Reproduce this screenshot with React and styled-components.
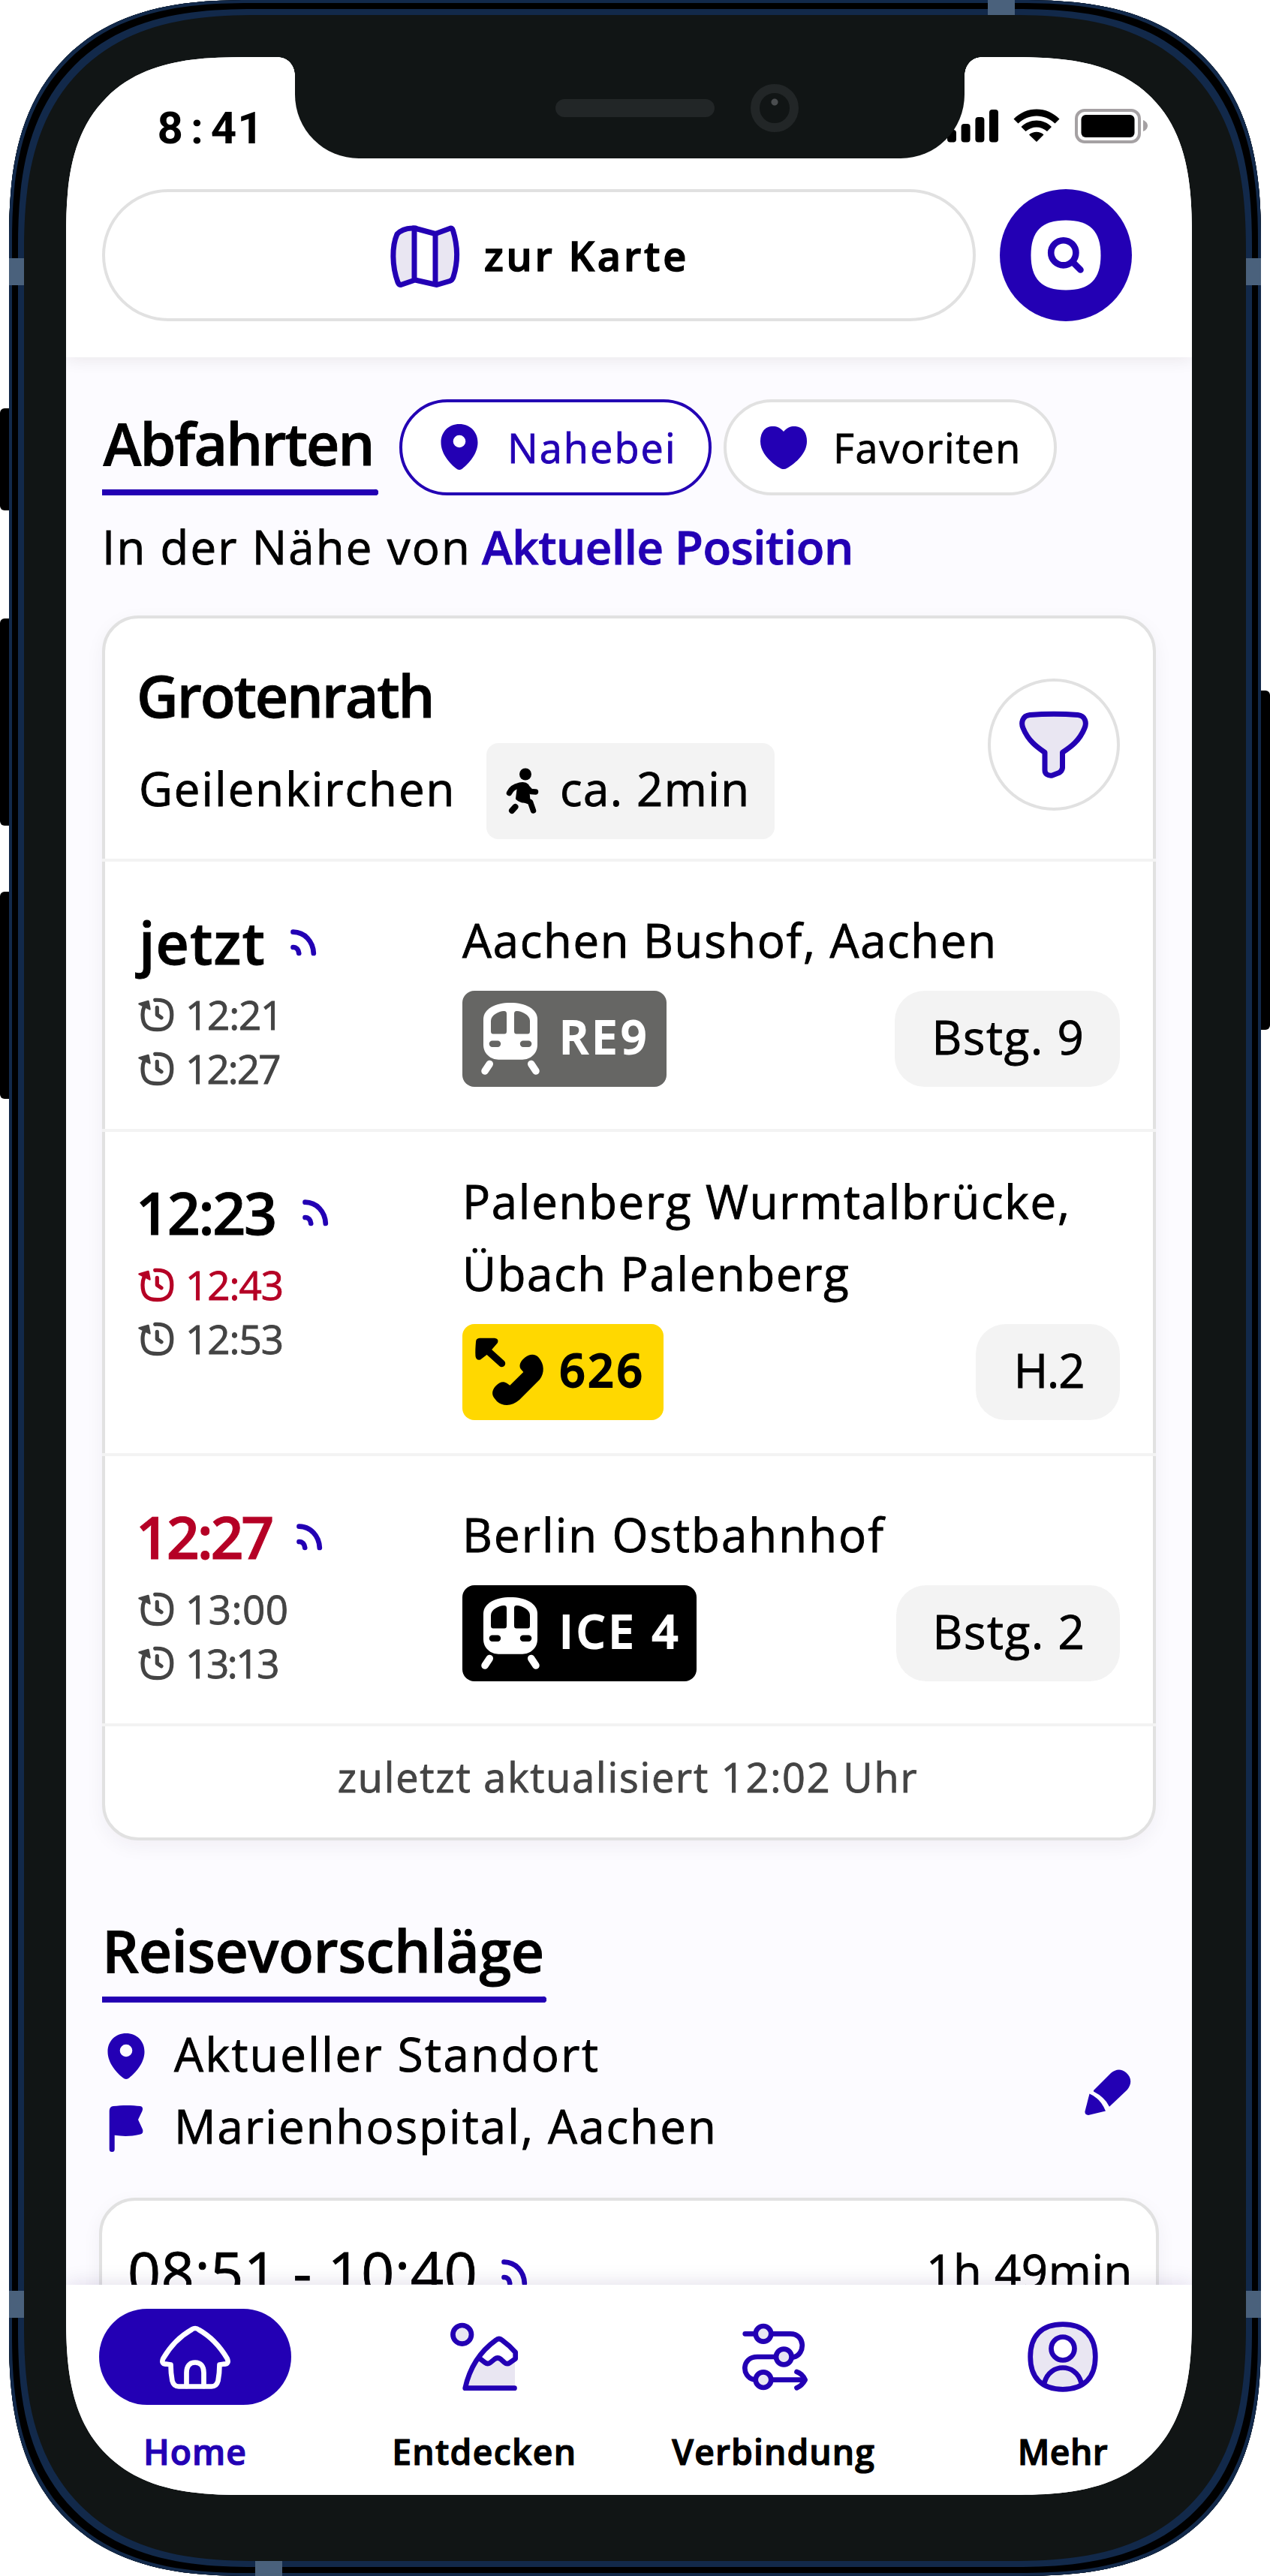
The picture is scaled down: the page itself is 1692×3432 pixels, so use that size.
import React from "react";
import styled, { createGlobalStyle } from "styled-components";

const BLUE = "#2300b4";
const TINT = "#e9e6f2";
const LINE = "#e1e1e1";
const SOFT = "#f3f3f3";
const GREY = "#444444";
const RED = "#b50025";

const GlobalStyle = createGlobalStyle`
  * { box-sizing: border-box; }
  html, body { margin: 0; padding: 0; background: #fff; }
  body { font-family: "Open Sans", "Noto Sans", sans-serif; color: #000; }
  svg { display: block; flex: none; overflow: visible; }
`;

/* ---------- device ---------- */

const Device = styled.div`
  position: relative;
  width: 1692px;
  height: 3432px;
  padding: 0 12px;
  overflow: hidden;
`;

const Frame = styled.div`
  position: relative;
  height: 3432px;
  padding: 76px 72px 108px 76px;
  background: #111515;
  border-radius: 320px;
  corner-shape: superellipse(1.354);
  box-shadow: inset 0 0 0 4px #12294a, inset 0 0 0 12px #000, inset 0 0 0 20px #12294a;
`;

const SideButton = styled.div`
  position: absolute;
  ${(p) => p.$side}: 0;
  top: ${(p) => p.$top}px;
  width: 12px;
  height: ${(p) => p.$height}px;
  background: #000;
  border-radius: ${(p) => (p.$side === "left" ? "6px 0 0 6px" : "0 6px 6px 0")};
`;

const Antenna = styled.div`
  position: absolute;
  left: ${(p) => p.$x}px;
  top: ${(p) => p.$y}px;
  width: ${(p) => (p.$flat ? 36 : 20)}px;
  height: ${(p) => (p.$flat ? 20 : 36)}px;
  background: #4a617c;
`;

const Notch = styled.div`
  position: absolute;
  z-index: 5;
  left: 393px;
  top: 70px;
  width: 892px;
  height: 141px;
  background: #111515;
  border-radius: 0 0 85px 85px;
`;

const NotchFlare = styled.div`
  position: absolute;
  z-index: 5;
  top: 76px;
  left: ${(p) => (p.$right ? 1285 : 371)}px;
  width: 22px;
  height: 24px;
  background: radial-gradient(
    ellipse 22px 24px at ${(p) => (p.$right ? "100%" : "0")} 100%,
    transparent 98%,
    #111515 100%
  );
`;

const Speaker = styled.div`
  position: absolute;
  left: 347px;
  top: 62px;
  width: 212px;
  height: 24px;
  border-radius: 12px;
  background: #222627;
`;

const Camera = styled.div`
  position: absolute;
  left: 607px;
  top: 42px;
  width: 64px;
  height: 64px;
  border-radius: 50%;
  border: 12px solid #222627;
  background: radial-gradient(circle at 20px 12px, #4a4d4f 0 4px, transparent 5px);
`;

const Screen = styled.div`
  display: flex;
  flex-direction: column;
  width: 1500px;
  height: 3248px;
  overflow: hidden;
  background: #fcfbff;
  border-radius: 240px;
  corner-shape: superellipse(1.446);
`;

/* ---------- shared ---------- */

const Text = styled.span`
  display: block;
  white-space: nowrap;
  font-size: ${(p) => p.$size}px;
  font-weight: ${(p) => p.$weight || 400};
  letter-spacing: ${(p) => p.$spacing || 0}px;
  line-height: ${(p) => p.$line || 96}px;
  color: ${(p) => p.$color || "#000"};
  -webkit-text-stroke: ${(p) => p.$stroke || 0.9}px currentColor;
`;

const Nudge = styled.div`
  margin-left: ${(p) => p.$x}px;
`;

const Lift = styled.div`
  padding-bottom: ${(p) => p.$by}px;
`;

/* ---------- header ---------- */

const Header = styled.header`
  position: relative;
  z-index: 2;
  flex: none;
  height: 400px;
  background: #fff;
  box-shadow: 0 2px 22px rgba(30, 20, 10, 0.09);
`;

const StatusBar = styled.div`
  display: flex;
  justify-content: space-between;
  height: 176px;
  padding: 64px 58px 0 121px;
`;

const Clock = styled.div`
  display: flex;
  height: 62px;
  font: 700 60px/62px Roboto, "Open Sans", sans-serif;
`;

const ClockCell = styled.span`
  width: 35.6px;
  text-align: center;
`;

const StatusIcons = styled.div`
  display: flex;
  gap: 20px;
  padding-top: 5px;
`;

const SearchRow = styled.div`
  display: flex;
  gap: 32px;
  padding-left: 48px;
`;

const MapButton = styled.div`
  display: flex;
  align-items: center;
  justify-content: center;
  gap: 31px;
  width: 1164px;
  height: 176px;
  border: 4px solid ${LINE};
  border-radius: 88px;
  background: #fff;
`;

const RoundButton = styled.div`
  display: flex;
  align-items: center;
  justify-content: center;
  flex: none;
  width: 176px;
  height: 176px;
  border-radius: 50%;
  border: ${(p) => (p.$filled ? "none" : `4px solid ${LINE}`)};
  background: ${(p) => (p.$filled ? BLUE : "#fff")};
`;

/* ---------- content ---------- */

const Content = styled.main`
  flex: 1;
  min-height: 0;
  overflow: hidden;
  padding: 56px 44px 0 48px;
`;

const TitleRow = styled.div`
  display: flex;
  height: 128px;
`;

const Title = styled.h2`
  margin: 0;
  width: ${(p) => p.$width}px;
  height: 128px;
  background: linear-gradient(${BLUE}, ${BLUE}) 0 100% / calc(100% - 4px) 8px no-repeat,
    radial-gradient(circle at calc(100% - 4px) calc(100% - 4px), ${BLUE} 4px, transparent 4.6px);
`;

const FilterChip = styled.div`
  display: flex;
  align-items: center;
  gap: ${(p) => p.$inner}px;
  width: ${(p) => p.$width}px;
  height: 128px;
  margin-left: ${(p) => p.$gap}px;
  padding-left: 44px;
  border: 4px solid ${(p) => (p.$active ? BLUE : LINE)};
  border-radius: 64px;
  background: #fff;
`;

const Nearby = styled.div`
  display: flex;
  gap: 14px;
  height: 160px;
`;

const Card = styled.section`
  width: 1404px;
  border: 4px solid ${LINE};
  border-radius: 48px;
  background: #fff;
  box-shadow: 0 8px 26px rgba(30, 20, 50, 0.05);
`;

const StopHeader = styled.div`
  display: flex;
  justify-content: space-between;
  height: 320px;
  padding: 38px 44px 0;
`;

const FilterSlot = styled.div`
  padding-top: 42px;
`;

const StopLine = styled.div`
  display: flex;
  align-items: center;
  height: 124px;
`;

const StopPlace = styled.div`
  width: 464px;
  padding: 0 0 9px 1px;
`;

const WalkChip = styled.div`
  display: flex;
  align-items: center;
  gap: 18px;
  width: 384px;
  height: 128px;
  padding-left: 16px;
  border-radius: 16px;
  background: ${SOFT};
`;

const Departure = styled.div`
  display: flex;
  height: ${(p) => p.$height}px;
  margin: 0 -4px;
  padding: 0 48px;
  border-top: 4px solid ${SOFT};
`;

const Times = styled.div`
  width: 432px;
  padding-top: 48px;
`;

const TimeMain = styled.div`
  display: flex;
  align-items: center;
  gap: ${(p) => p.$gap}px;
  height: 120px;
`;

const TimeNext = styled.div`
  display: flex;
  align-items: center;
  gap: 15px;
  height: 72px;
`;

const Route = styled.div`
  display: flex;
  flex: 1;
  flex-direction: column;
  justify-content: center;
  gap: 20px;
`;

const RouteMeta = styled.div`
  display: flex;
  justify-content: space-between;
`;

const LineBadge = styled.div`
  display: flex;
  align-items: center;
  gap: 17px;
  width: ${(p) => p.$width}px;
  height: 128px;
  padding-left: 16px;
  border-radius: 16px;
  background: ${(p) => p.$bg};
`;

const Platform = styled.div`
  display: flex;
  align-items: center;
  justify-content: center;
  width: ${(p) => p.$width}px;
  height: 128px;
  padding: 0 0 7px 3px;
  border-radius: 40px;
  background: ${SOFT};
`;

const Updated = styled.div`
  display: flex;
  justify-content: center;
  height: 152px;
  margin: 0 -4px;
  padding-right: 3px;
  border-top: 4px solid ${SOFT};
`;

const Suggestions = styled.section`
  padding-top: 88px;
`;

const Places = styled.div`
  display: flex;
  align-items: center;
  justify-content: space-between;
  width: 1372px;
  margin: 24px 0 44px;
`;

const Place = styled.div`
  display: flex;
  align-items: center;
  gap: 32px;
  height: 96px;
`;

const TripCard = styled.div`
  display: flex;
  justify-content: space-between;
  width: 1412px;
  height: 400px;
  margin-left: -4px;
  padding: 35px 31px 0 34px;
  border: 4px solid ${LINE};
  border-radius: 48px;
  background: #fff;
  box-shadow: 0 8px 26px rgba(30, 20, 50, 0.05);
`;

const TripTime = styled.div`
  display: flex;
  align-items: flex-start;
  gap: 29px;
`;

const TripSignal = styled.div`
  padding-top: 41px;
`;

/* ---------- bottom navigation ---------- */

const Nav = styled.nav`
  position: relative;
  z-index: 2;
  display: flex;
  flex: none;
  justify-content: space-between;
  height: 280px;
  padding: 32px 44px 0;
  background: #fff;
  box-shadow: 0 -2px 24px rgba(35, 0, 100, 0.13);
`;

const NavItem = styled.div`
  display: flex;
  flex-direction: column;
  align-items: center;
  width: 256px;
`;

const NavIcon = styled.div`
  display: flex;
  align-items: center;
  justify-content: center;
  width: 256px;
  height: 128px;
  margin-bottom: 31px;
  border-radius: 64px;
  background: ${(p) => (p.$active ? BLUE : "transparent")};
`;

/* ---------- icons ---------- */

const line = { fill: "none", strokeLinecap: "round", strokeLinejoin: "round" };

const CellBars = () => (
  <svg width="68" height="46" viewBox="0 0 68 46">
    <rect x="0" y="28" width="12" height="16.5" rx="4" />
    <rect x="18.6" y="20" width="12" height="24.5" rx="4" />
    <rect x="37.4" y="11" width="12" height="33.5" rx="4" />
    <rect x="56" y="1" width="12" height="43.5" rx="4" />
  </svg>
);

const Wifi = () => (
  <svg width="62" height="46" viewBox="0 0 62 46">
    <path d="M0.5 13.5 C17 -4 45 -4 61.5 13.5 L55.5 19.5 C42 6 20 6 6.5 19.5Z" />
    <path d="M10.5 24 C22 12.5 40 12.5 51 24 L45 30 C37 22.5 25 22.5 16.5 30Z" />
    <path d="M21 34.5 C26.5 29.5 35.5 29.5 40.5 34.5 L31 44Z" />
  </svg>
);

const Battery = () => (
  <svg width="98" height="46" viewBox="0 0 98 46">
    <rect x="2" y="2" width="84" height="42" rx="11" fill="none" stroke="#a5a1a3" strokeWidth="4" />
    <rect x="8.5" y="8" width="71" height="30" rx="6" />
    <path d="M91 15 C99 18 99 27 91 30Z" fill="#a5a1a3" />
  </svg>
);

const MapIcon = () => (
  <svg width="96" height="96" viewBox="520 292 96 96" {...line}>
    <path d="M531 312 Q539 304.5 554 304 V373 L534 379 C524 356 525 328 531 312Z" fill={TINT} />
    <path d="M582 311 L604 304.5 C612 326 611.5 352 604 373 L582 379.5Z" fill={TINT} />
    <path
      d="M531 312 Q538 304.5 551 304 Q555 303.5 558 305 L582 311.5 L601 304.5 Q604.5 303 605.5 307 C612 328 612 350 606 369 Q605 373 601 374.5 L584 379.5 L555 373 L536 379.5 Q533.5 379.5 532 376 C524 354 524 328 531 312Z"
      stroke={BLUE}
      strokeWidth="7"
    />
    <path d="M554 305 V372 M582 312 V378" stroke={BLUE} strokeWidth="7" />
  </svg>
);

const SearchIcon = () => (
  <svg width="96" height="96" viewBox="1372 292 96 96" {...line}>
    <path
      d="M1420 293.5 C1452 293.5 1466.5 308 1466.5 340 S1452 386.5 1420 386.5 S1373.5 372 1373.5 340 S1388 293.5 1420 293.5Z"
      fill="#fff"
    />
    <circle cx="1416.8" cy="336.8" r="16.6" stroke={BLUE} strokeWidth="8.6" />
    <path d="M1429.5 349.5 L1439.5 359.5" stroke={BLUE} strokeWidth="8.6" />
  </svg>
);

const PinIcon = () => (
  <svg width="64" height="64" viewBox="0 0 64 64" fill={BLUE}>
    <path
      fillRule="evenodd"
      d="M32 1 C18 1 7.5 11 7.5 25.5 C7.5 41 20 54 27.5 60 C30.5 62.5 33.5 62.5 36.5 60 C44 54 56.5 41 56.5 25.5 C56.5 11 46 1 32 1Z M32 15.7 a8.3 8.3 0 1 1 0 16.6 a8.3 8.3 0 1 1 0 -16.6Z"
    />
  </svg>
);

const HeartIcon = () => (
  <svg width="64" height="64" viewBox="0 0 64 64" fill={BLUE}>
    <path d="M32 11 C27 4.5 21 3.5 16 4 C6 5 1 13 1 24 C1 40 16 53 27 59.5 C30.5 61.5 33.5 61.5 37 59.5 C48 53 63 40 63 24 C63 13 58 5 48 4 C43 3.5 37 4.5 32 11Z" />
  </svg>
);

const WalkIcon = () => (
  <svg width="64" height="64" viewBox="0 0 64 64" stroke="#000" {...line}>
    <circle cx="36" cy="9.5" r="8" fill="#000" stroke="none" />
    <path d="M14.5 34.5 Q18 26.5 28 24.5" strokeWidth="7.5" />
    <path d="M27 22.5 Q35 20 39 24 L41 44 Q33 49 24.5 42Z" fill="#000" strokeWidth="3" />
    <path d="M38 27 L43 32.5 L49.5 33" strokeWidth="7.5" />
    <path d="M33 43 L42.5 46.5 L46.5 58" strokeWidth="7.5" />
    <path d="M22.5 53 L18 58" strokeWidth="8" />
  </svg>
);

const FunnelIcon = () => (
  <svg width="96" height="96" viewBox="1356 944 96 96" {...line}>
    <path
      d="M1372 952.5 Q1404 950 1436 952.5 C1446 953.5 1448 963 1445 970 C1438 987 1427 995 1415.5 1002.5 V1023 Q1415 1027 1411 1029.5 L1402 1033 C1396 1034 1392 1031 1392 1026 V1002.5 C1381 995 1370 987 1363 970 C1360 963 1362 953.5 1372 952.5Z"
      fill={TINT}
      stroke={BLUE}
      strokeWidth="7"
    />
  </svg>
);

const SignalIcon = () => (
  <svg width="40" height="40" viewBox="0 0 40 40" stroke={BLUE} strokeWidth="6.7" {...line}>
    <path d="M6.5 5.7 C22 6 33 18 33.8 34" />
    <path d="M6.5 26 C11 26 13.8 29.5 14.2 34" />
  </svg>
);

const HistoryIcon = ({ color }) => (
  <svg width="48" height="48" viewBox="0 0 48 48" stroke={color} strokeWidth="5.2" {...line}>
    <path d="M22.7 4.3 C39 3.5 44.8 11 44.8 24 S39 43.7 25.5 43.7 S6 38 6 24 Q6 18 8 13.5" />
    <path d="M1.5 9.5 L13.5 6 L15.5 16.5 Z" fill={color} strokeWidth="2.5" />
    <path d="M25.3 14.3 V24 L31 27.8" />
  </svg>
);

const TrainIcon = ({ bg }) => (
  <svg width="96" height="96" viewBox="0 0 96 96">
    <path
      fill="#fff"
      d="M12 22 C12 8 28 0 48 0 S84 8 84 22 V56 C84 68 74 75.7 64 75.7 H32 C22 75.7 12 68 12 56Z"
    />
    <g fill={bg}>
      <path d="M22 24 C22 16 33 11.5 39 11 Q43 10.5 43 14.5 V38 Q43 41.5 40 41.5 H25 Q22 41.5 22 38Z" />
      <path d="M74 24 C74 16 63 11.5 57 11 Q53 10.5 53 14.5 V38 Q53 41.5 56 41.5 H71 Q74 41.5 74 38Z" />
      <rect x="19.7" y="50.5" width="15.5" height="8.5" rx="4.2" />
      <rect x="60.8" y="50.5" width="15.5" height="8.5" rx="4.2" />
    </g>
    <path
      d="M20.3 81.5 L14 91 M75.7 81.5 L82 91"
      stroke="#fff"
      strokeWidth="9.5"
      strokeLinecap="round"
    />
  </svg>
);

const CallBusIcon = () => (
  <svg width="96" height="96" viewBox="0 0 96 96">
    <path d="M2 8 Q2 3 7 2.8 L27 2.8 Q33 3.5 31 9 L23.7 17.5 L16.5 25 L8 31.5 Q2.5 33 1.5 27 C1 20 1.5 14 2 8Z" />
    <path d="M16 18 L36.5 36.5" stroke="#000" strokeWidth="9.5" strokeLinecap="round" />
    <path d="M65.3 48 L61.5 43.5 C58.5 38 63 32 67.5 28.5 C73 24 81 23 86 29 C93 37 94 49 87 58 L60 85 C50 94 38 94 30 87 L26 82 C22 76 25 70 29 66 C34 60.5 39 60 43.5 63 L47.3 65.7Z" />
  </svg>
);

const FlagIcon = () => (
  <svg width="64" height="64" viewBox="0 0 64 64" fill={BLUE}>
    <path d="M9.7 8 Q10 2.5 15 2 C26 0.5 40 0.5 51 2 Q55.5 3 53.5 8.5 L48 20 L54 33 Q56 38.5 50 39.8 C38 42.5 28 42.5 16.7 40.8 V59.5 Q16.7 63 13.2 63 Q9.7 63 9.7 59.5Z" />
  </svg>
);

const PencilIcon = () => (
  <svg width="64" height="64" viewBox="0 0 64 64" fill={BLUE}>
    <path d="M13 29 L36 6 C43 0 50 0 56.5 5.5 C64 12 64 21 57.5 28.5 L34 50.8 Q28 38 13 30.5Z" />
    <path d="M7.5 33.5 Q22 39.5 29 56.5 L6 62 Q1 62 1.5 57Z" />
  </svg>
);

const HomeIcon = () => (
  <svg width="96" height="96" viewBox="0 0 96 96" stroke="#fff" strokeWidth="6.7" {...line}>
    <path d="M48 10 Q50.5 10 53 12 C68 20.5 81 34 90.5 50 C93 55 91 58 87 57.5 L80.5 58.5 C80.5 66 80 72 78.5 80 Q76.5 87.5 70 87.5 H26 Q19.5 87.5 17.5 80 C16 72 15.5 66 15.5 58.5 L9 57.5 C5 58 3 55 5.5 50 C15 34 28 20.5 43 12 Q45.5 10 48 10Z" />
    <path d="M36.5 87 V69 C36.5 60 41 55.5 48 55.5 S59.5 60 59.5 69 V87" />
  </svg>
);

const ExploreIcon = () => (
  <svg width="96" height="96" viewBox="0 0 96 96" stroke={BLUE} strokeWidth="6.7" {...line}>
    <path
      d="M41.5 50 L53 57 L66 49.7 L78.7 57 L89 52 V89.7 H23 C27 74 33 61 41.5 50Z"
      fill={TINT}
      stroke="none"
    />
    <circle cx="18.7" cy="18.3" r="12.3" fill={TINT} />
    <path d="M88.5 89.7 H22.7 C28 66 41 42 63.7 25.8 Q67.5 22.5 71.5 25.5 Q82 33 89.7 42 V50.5 L82 56 Q78.5 58.5 75 55.5 L70 51 Q66 48 62 51 L56.5 55.5 Q53 58.5 49 55.5 L42.5 50.5" />
  </svg>
);

const RouteIcon = () => (
  <svg width="96" height="96" viewBox="0 0 96 96" stroke={BLUE} strokeWidth="6.7" {...line}>
    <path d="M9.7 17.3 H23.5 M45 17.3 H70 C90 17.3 90.5 45 74 48.5 L71.5 48 M50 48 H26 C5 48 4.5 74 21 78.3 L24 78.7 M45 78.7 H88.5" />
    <path d="M78.5 68 Q85.5 70 89.7 78.7 Q85.5 86.5 78.5 89.3" />
    <g fill={TINT}>
      <circle cx="34" cy="17.3" r="10.3" />
      <circle cx="61.3" cy="48" r="10.3" />
      <circle cx="34" cy="78.7" r="10.3" />
    </g>
  </svg>
);

const ProfileIcon = () => (
  <svg width="96" height="96" viewBox="0 0 96 96" stroke={BLUE} strokeWidth="6.7" {...line}>
    <path
      d="M48 4.7 C76 4.7 91.3 20 91.3 48 S76 91.3 48 91.3 S4.7 76 4.7 48 S20 4.7 48 4.7Z"
      fill={TINT}
    />
    <circle cx="48" cy="37" r="15.5" fill="#fff" />
    <path d="M23.6 82 C31 56 65 56 72.4 82" />
  </svg>
);

/* ---------- data ---------- */

const departures = [
  {
    height: 360,
    time: { label: "jetzt", spacing: 1.1, gap: 30, shift: 1 },
    next: [
      { label: "12:21", spacing: -1.2 },
      { label: "12:27", spacing: -1.9 },
    ],
    stops: [{ label: "Aachen Bushof, Aachen", spacing: 1.7, shift: 0 }],
    badge: { label: "RE9", spacing: 4.4, width: 272, bg: "#666664", color: "#fff" },
    platform: { label: "Bstg. 9", width: 300, spacing: 1.7 },
  },
  {
    height: 432,
    time: { label: "12:23", spacing: -2.3, gap: 33, shift: -3 },
    next: [
      { label: "12:43", spacing: -1, color: RED },
      { label: "12:53", spacing: -1 },
    ],
    stops: [
      { label: "Palenberg Wurmtalbrücke,", spacing: 1.74, shift: 0 },
      { label: "Übach Palenberg", spacing: 1.7, shift: 0 },
    ],
    badge: { label: "626", spacing: 3.2, width: 268, bg: "#ffd800", color: "#000", call: true },
    platform: { label: "H.2", width: 192, spacing: -1.1 },
  },
  {
    height: 360,
    time: { label: "12:27", spacing: -3.2, gap: 30, shift: -3, color: RED },
    next: [
      { label: "13:00", spacing: 0.5 },
      { label: "13:13", spacing: -2.4 },
    ],
    stops: [{ label: "Berlin Ostbahnhof", spacing: 2.1, shift: 0 }],
    badge: { label: "ICE 4", spacing: 4.1, width: 312, bg: "#000", color: "#fff" },
    platform: { label: "Bstg. 2", width: 298, spacing: 1.7 },
  },
];

const tabs = [
  { label: "Home", spacing: 1, icon: <HomeIcon />, active: true },
  { label: "Entdecken", spacing: 1.3, icon: <ExploreIcon /> },
  { label: "Verbindung", spacing: 1.1, icon: <RouteIcon /> },
  { label: "Mehr", spacing: 0.4, icon: <ProfileIcon /> },
];

export default function App() {
  return (
    <>
      <GlobalStyle />
      <Device>
        <SideButton $side="left" $top={544} $height={136} />
        <SideButton $side="left" $top={824} $height={276} />
        <SideButton $side="left" $top={1188} $height={276} />
        <SideButton $side="right" $top={920} $height={452} />
        <Frame>
          <Screen>
            <Header>
              <StatusBar>
                <Clock>
                  <ClockCell>8</ClockCell>
                  <ClockCell>:</ClockCell>
                  <ClockCell>4</ClockCell>
                  <ClockCell>1</ClockCell>
                </Clock>
                <StatusIcons>
                  <CellBars />
                  <Wifi />
                  <Battery />
                </StatusIcons>
              </StatusBar>
              <SearchRow>
                <MapButton>
                  <MapIcon />
                  <Text $size={54} $weight={600} $spacing={3.8} $stroke={1.4}>zur Karte</Text>
                </MapButton>
                <RoundButton $filled>
                  <SearchIcon />
                </RoundButton>
              </SearchRow>
            </Header>

            <Content>
              <TitleRow>
                <Title $width={368}>
                  <Nudge $x={1.5}>
                    <Text $size={77} $weight={600} $spacing={-1.92} $line={117}>Abfahrten</Text>
                  </Nudge>
                </Title>
                <FilterChip $width={416} $gap={28} $inner={32} $active>
                  <PinIcon />
                  <Text $size={54} $spacing={2.09} $color={BLUE}>Nahebei</Text>
                </FilterChip>
                <FilterChip $width={444} $gap={16} $inner={34}>
                  <HeartIcon />
                  <Text $size={54} $spacing={1.7}>Favoriten</Text>
                </FilterChip>
              </TitleRow>
              <Nearby>
                <Text $size={61.7} $spacing={2.15} $line={137}>In der Nähe von</Text>
                <Text $size={61.7} $weight={600} $spacing={-0.45} $line={137} $color={BLUE}>
                  Aktuelle Position
                </Text>
              </Nearby>

              <Card>
                <StopHeader>
                  <div>
                    <Nudge $x={-2}>
                      <Text $size={77} $weight={600} $spacing={-2.19} $line={130}>Grotenrath</Text>
                    </Nudge>
                    <StopLine>
                      <StopPlace>
                        <Text $size={61.7} $spacing={2.02}>Geilenkirchen</Text>
                      </StopPlace>
                      <WalkChip>
                        <WalkIcon />
                        <Lift $by={8}>
                          <Text $size={61.7} $spacing={1.48}>ca. 2min</Text>
                        </Lift>
                      </WalkChip>
                    </StopLine>
                  </div>
                  <FilterSlot>
                    <RoundButton>
                      <FunnelIcon />
                    </RoundButton>
                  </FilterSlot>
                </StopHeader>

                {departures.map((d) => (
                  <Departure key={d.time.label} $height={d.height}>
                    <Times>
                      <TimeMain $gap={d.time.gap}>
                        <Nudge $x={d.time.shift}>
                          <Text
                            $size={77}
                            $weight={600}
                            $spacing={d.time.spacing}
                            $line={120}
                            $color={d.time.color}
                          >
                            {d.time.label}
                          </Text>
                        </Nudge>
                        <SignalIcon />
                      </TimeMain>
                      {d.next.map((n) => (
                        <TimeNext key={n.label}>
                          <HistoryIcon color={n.color || GREY} />
                          <Text $size={53} $spacing={n.spacing} $line={72} $color={n.color || GREY}>
                            {n.label}
                          </Text>
                        </TimeNext>
                      ))}
                    </Times>
                    <Route>
                      <div>
                        {d.stops.map((s) => (
                          <Nudge key={s.label} $x={s.shift}>
                            <Text $size={61.7} $spacing={s.spacing}>{s.label}</Text>
                          </Nudge>
                        ))}
                      </div>
                      <RouteMeta>
                        <LineBadge $width={d.badge.width} $bg={d.badge.bg}>
                          {d.badge.call ? <CallBusIcon /> : <TrainIcon bg={d.badge.bg} />}
                          <Lift $by={6}>
                            <Text
                              $size={61}
                              $weight={600}
                              $stroke={1.8}
                              $spacing={d.badge.spacing}
                              $color={d.badge.color}
                            >
                              {d.badge.label}
                            </Text>
                          </Lift>
                        </LineBadge>
                        <Platform $width={d.platform.width}>
                          <Text $size={61.7} $spacing={d.platform.spacing}>{d.platform.label}</Text>
                        </Platform>
                      </RouteMeta>
                    </Route>
                  </Departure>
                ))}

                <Updated>
                  <Text $size={54} $spacing={1.8} $line={134} $color={GREY}>
                    zuletzt aktualisiert 12:02 Uhr
                  </Text>
                </Updated>
              </Card>

              <Suggestions>
                <Title $width={592}>
                  <Text $size={77} $weight={600} $spacing={-0.5} $line={117}>Reisevorschläge</Text>
                </Title>
                <Places>
                  <div>
                    <Place>
                      <PinIcon />
                      <Lift $by={8}>
                        <Text $size={61.7} $spacing={2.48} $line={86}>Aktueller Standort</Text>
                      </Lift>
                    </Place>
                    <Place>
                      <FlagIcon />
                      <Lift $by={8}>
                        <Text $size={61.7} $spacing={2.1} $line={86}>Marienhospital, Aachen</Text>
                      </Lift>
                    </Place>
                  </div>
                  <PencilIcon />
                </Places>
                <TripCard>
                  <TripTime>
                    <Text $size={77} $spacing={0.69} $line={120}>08:51 - 10:40</Text>
                    <TripSignal>
                      <SignalIcon />
                    </TripSignal>
                  </TripTime>
                  <Text $size={61.7} $spacing={0.6} $line={116}>1h 49min</Text>
                </TripCard>
              </Suggestions>
            </Content>

            <Nav>
              {tabs.map((t) => (
                <NavItem key={t.label}>
                  <NavIcon $active={t.active}>{t.icon}</NavIcon>
                  <Text
                    $size={46.3}
                    $weight={600}
                    $stroke={1.2}
                    $spacing={t.spacing}
                    $line={64}
                    $color={t.active ? BLUE : "#000"}
                  >
                    {t.label}
                  </Text>
                </NavItem>
              ))}
            </Nav>
          </Screen>
        </Frame>
        <Notch>
          <Speaker />
          <Camera />
        </Notch>
        <NotchFlare />
        <NotchFlare $right />
        <Antenna $x={1316} $y={0} $flat />
        <Antenna $x={340} $y={3412} $flat />
        <Antenna $x={12} $y={344} />
        <Antenna $x={1660} $y={344} />
        <Antenna $x={12} $y={3052} />
        <Antenna $x={1660} $y={3052} />
      </Device>
    </>
  );
}
